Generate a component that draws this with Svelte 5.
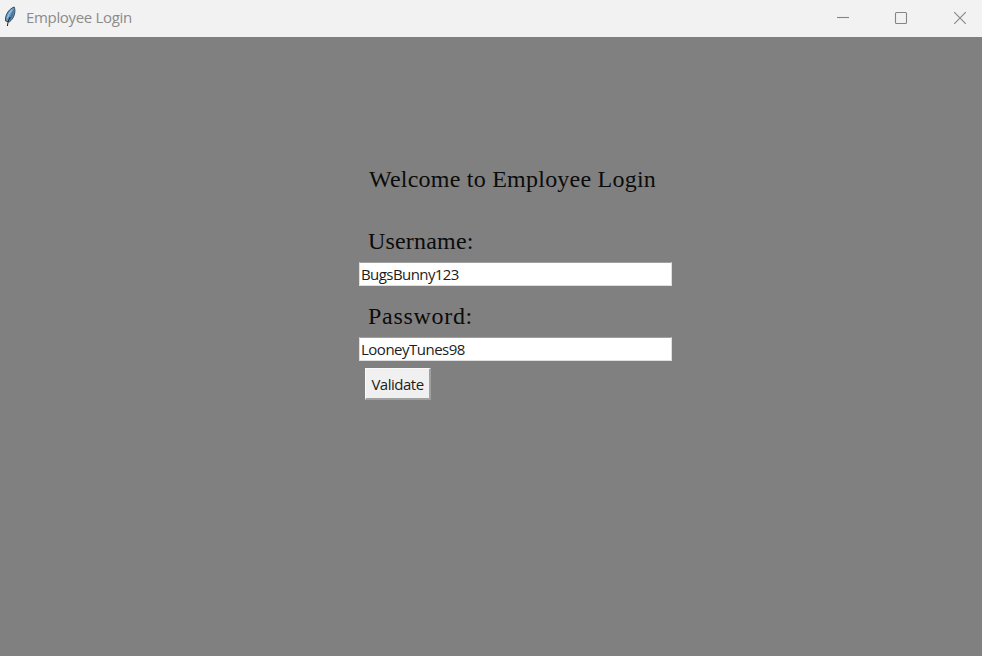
<script>
  let username = $state('BugsBunny123');
  let password = $state('LooneyTunes98');
</script>

<div class="window">
  <header>
    <svg class="feather" width="12" height="22" viewBox="0 0 12 22">
      <path d="M1.6 15C0.8 9.8 4.2 3.2 10.2 1C12 5.4 10.2 12.6 5.2 16Z" fill="#6a9cc6" stroke="#2b3b49" stroke-width="0.9" />
      <path d="M5.6 14.5C8.8 11.8 10.3 7 9.7 3L6.4 9.6Z" fill="#47759b" />
      <path d="M6 11C4.6 13.6 3.6 16 3.4 20" fill="none" stroke="#20262c" stroke-width="1.1" />
      <path d="M8.2 3.6C5.9 6 4.3 8.8 3.4 12" fill="none" stroke="#9cc3e0" stroke-width="1.1" />
    </svg>
    <span class="caption">Employee Login</span>
    <div class="controls">
      <svg width="14" height="14" viewBox="0 0 14 14"><path d="M1 6.5H13" /></svg>
      <svg width="14" height="14" viewBox="0 0 14 14"><rect x="1.5" y="1.5" width="11" height="11" rx="1" /></svg>
      <svg width="14" height="14" viewBox="0 0 14 14"><path d="M1.2 1.2L12.8 12.8M12.8 1.2L1.2 12.8" /></svg>
    </div>
  </header>
  <main>
    <h1>Welcome to Employee Login</h1>
    <label for="user">Username:</label>
    <input id="user" class="user" type="text" spellcheck="false" bind:value={username} />
    <label class="second" for="pass">Password:</label>
    <input id="pass" class="pass" type="text" spellcheck="false" bind:value={password} />
    <button type="button">Validate</button>
  </main>
</div>

<style>
  :global(body) { margin: 0; overflow: hidden; }
  .window {
    height: 656px;
    display: flex;
    flex-direction: column;
    background: #808080;
  }
  header {
    height: 37px;
    flex: none;
    box-sizing: border-box;
    display: flex;
    align-items: center;
    padding: 0 15px 2px 4px;
    background: #f2f2f2;
  }
  .feather { margin-top: -1px; }
  .caption {
    margin: -2px 0 0 10px;
    font: 15px/20px "Open Sans", sans-serif;
    letter-spacing: -0.33px;
    color: #8b8b8b;
  }
  .controls { margin-left: auto; display: flex; gap: 44px; padding-top: 1px; }
  .controls svg { fill: none; stroke: #858585; stroke-width: 1.1; }
  .controls svg:last-child { margin-left: 1px; }
  main {
    display: flex;
    flex-direction: column;
    align-items: flex-start;
    padding: 126px 0 0 359px;
  }
  h1, label {
    margin: 0 0 0 10px;
    font: 24px/32px "Liberation Serif", serif;
    color: #0b0b0b;
  }
  h1 { margin-bottom: 30px; letter-spacing: 0.23px; }
  label { margin-left: 9px; padding-bottom: 1px; letter-spacing: 0.18px; }
  .second { margin-top: -1px; letter-spacing: 0.7px; }
  input {
    box-sizing: border-box;
    width: 313px;
    height: 24px;
    margin: 4px 0 15px;
    padding: 0 1px;
    border: 1px solid #dedede;
    border-top-color: #a0a0a0;
    border-radius: 0;
    outline: 0;
    background: #fff;
    color: #1c1c1c;
    font: 15px/20px "Open Sans", sans-serif;
  }
  .user { letter-spacing: -0.57px; }
  .pass { letter-spacing: -0.5px; margin-bottom: 7px; }
  button {
    box-sizing: border-box;
    width: 66px;
    height: 32px;
    margin-left: 6px;
    padding: 0;
    border: 1px solid #fafafa;
    border-right: 2px solid #a0a0a0;
    border-bottom: 2px solid #a0a0a0;
    border-radius: 0;
    background: #f0f0f0;
    color: #1c1c1c;
    font: 15px/20px "Open Sans", sans-serif;
    letter-spacing: -0.5px;
  }
</style>
